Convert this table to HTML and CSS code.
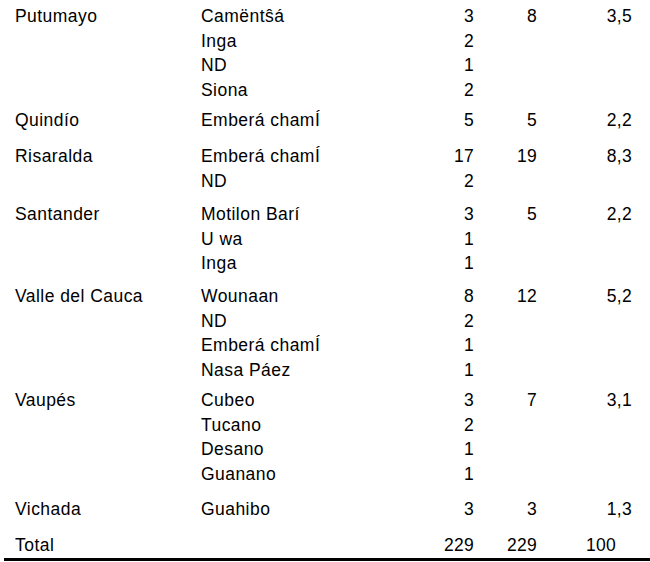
FILE: index.html
```html
<!DOCTYPE html>
<html lang="es">
<head>
<meta charset="utf-8">
<title>Tabla</title>
<link rel="stylesheet" href="styles.css">
</head>
<body>
<table class="data">
  <colgroup>
    <col class="c-dep"><col class="c-pue"><col class="c-n"><col class="c-t"><col class="c-p">
  </colgroup>
  <tbody class="grp g0">
    <tr><td class="dep">Putumayo</td><td>Camëntŝá</td><td class="num">3</td><td class="num">8</td><td class="num pct">3,5</td></tr>
    <tr><td></td><td>Inga</td><td class="num">2</td><td></td><td></td></tr>
    <tr><td></td><td>ND</td><td class="num">1</td><td></td><td></td></tr>
    <tr><td></td><td>Siona</td><td class="num">2</td><td></td><td></td></tr>
  </tbody>
  <tbody class="grp g1">
    <tr><td class="dep">Quindío</td><td>Emberá chamÍ</td><td class="num">5</td><td class="num">5</td><td class="num pct">2,2</td></tr>
  </tbody>
  <tbody class="grp g2">
    <tr><td class="dep">Risaralda</td><td>Emberá chamÍ</td><td class="num">17</td><td class="num">19</td><td class="num pct">8,3</td></tr>
    <tr><td></td><td>ND</td><td class="num">2</td><td></td><td></td></tr>
  </tbody>
  <tbody class="grp g3">
    <tr><td class="dep">Santander</td><td>Motilon Barí</td><td class="num">3</td><td class="num">5</td><td class="num pct">2,2</td></tr>
    <tr><td></td><td>U wa</td><td class="num">1</td><td></td><td></td></tr>
    <tr><td></td><td>Inga</td><td class="num">1</td><td></td><td></td></tr>
  </tbody>
  <tbody class="grp g4">
    <tr><td class="dep">Valle del Cauca</td><td>Wounaan</td><td class="num">8</td><td class="num">12</td><td class="num pct">5,2</td></tr>
    <tr><td></td><td>ND</td><td class="num">2</td><td></td><td></td></tr>
    <tr><td></td><td>Emberá chamÍ</td><td class="num">1</td><td></td><td></td></tr>
    <tr><td></td><td>Nasa Páez</td><td class="num">1</td><td></td><td></td></tr>
  </tbody>
  <tbody class="grp g5">
    <tr><td class="dep">Vaupés</td><td>Cubeo</td><td class="num">3</td><td class="num">7</td><td class="num pct">3,1</td></tr>
    <tr><td></td><td>Tucano</td><td class="num">2</td><td></td><td></td></tr>
    <tr><td></td><td>Desano</td><td class="num">1</td><td></td><td></td></tr>
    <tr><td></td><td>Guanano</td><td class="num">1</td><td></td><td></td></tr>
  </tbody>
  <tbody class="grp g6">
    <tr><td class="dep">Vichada</td><td>Guahibo</td><td class="num">3</td><td class="num">3</td><td class="num pct">1,3</td></tr>
  </tbody>
  <tbody class="grp g7 total">
    <tr><td class="dep">Total</td><td></td><td class="num">229</td><td class="num">229</td><td class="num pct tot">100</td></tr>
  </tbody>
</table>
</body>
</html>
```

FILE: styles.css
```css
html, body {
  margin: 0;
  padding: 0;
  background: #ffffff;
}

body {
  font-family: "Liberation Sans", Arial, sans-serif;
  font-size: 17.5px;
  letter-spacing: 0.45px;
  color: #000000;
}

.data {
  margin: 4px 0 0 4px;
  width: 646px;
  table-layout: fixed;
  border-collapse: collapse;
  border-spacing: 0;
}

.c-dep { width: 197px; }
.c-pue { width: 219px; }
.c-n { width: 54px; }
.c-t { width: 63px; }
.c-p { width: 113px; }

.data td {
  padding: 0;
  line-height: 24.5px;
  white-space: nowrap;
  vertical-align: top;
}

.data td.dep {
  padding-left: 11px;
}

.data td.num {
  text-align: right;
  letter-spacing: 0.3px;
}

.data td.pct {
  padding-right: 18px;
}

.data td.tot {
  padding-right: 34px;
}

.g1 tr:first-child td { padding-top: 6px; }
.g2 tr:first-child td { padding-top: 11.5px; }
.g3 tr:first-child td { padding-top: 9px; }
.g4 tr:first-child td { padding-top: 8.5px; }
.g5 tr:first-child td { padding-top: 6px; }
.g6 tr:first-child td { padding-top: 11px; }
.g7 tr:first-child td { padding-top: 11.5px; }

.total td {
  padding-bottom: 0;
  border-bottom: 3px solid #000000;
}
```
